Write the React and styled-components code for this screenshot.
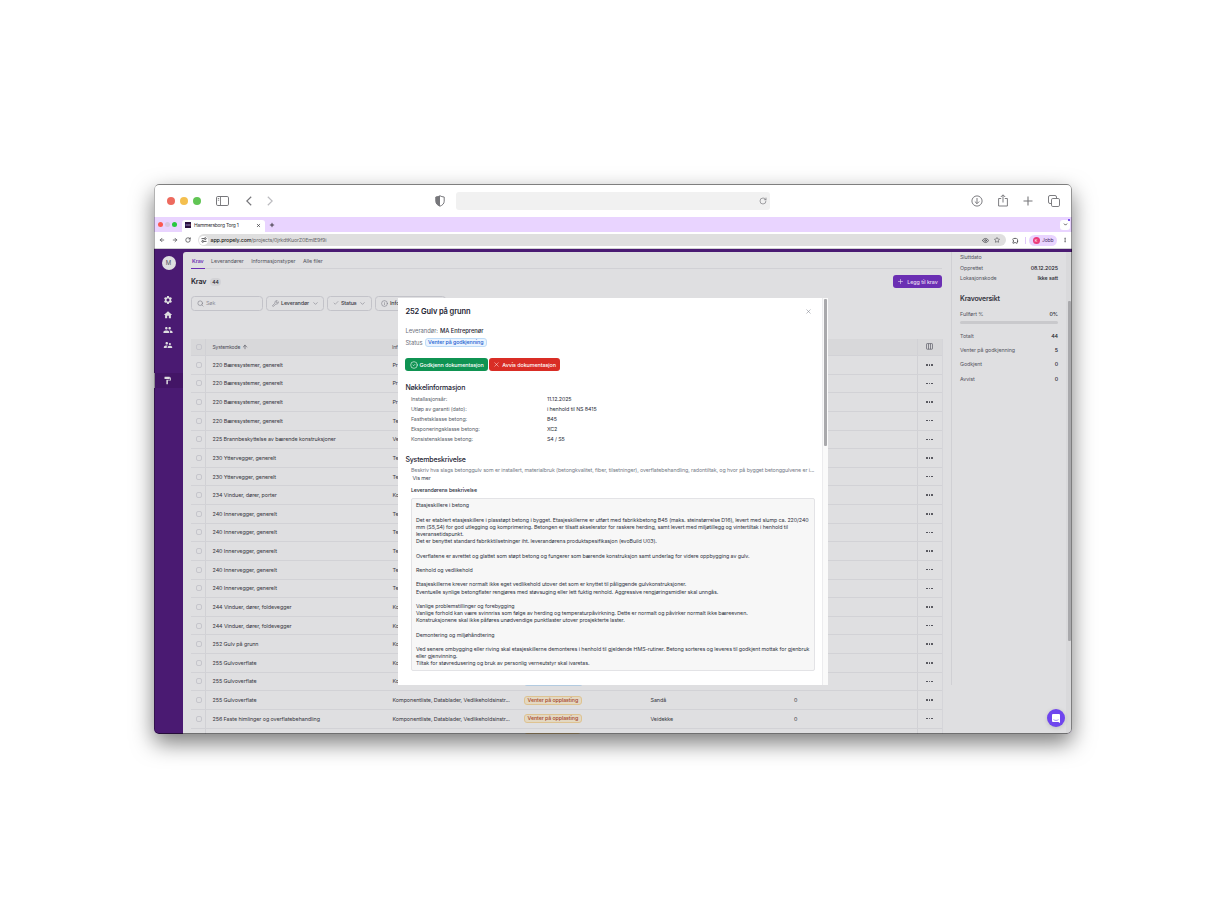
import React, { useState } from 'react'
import styled, { createGlobalStyle } from 'styled-components'
import {
  Search, ChevronDown, Check, Info, Plus, X, ArrowUp, ArrowLeft, ArrowRight,
  RotateCw, CircleCheck, Star, Eye, EllipsisVertical, Wrench
} from 'lucide-react'
import { MdSettings, MdHome, MdPeople, MdSupervisorAccount, MdFormatPaint, MdOutlineExtension } from 'react-icons/md'

const GlobalStyle = createGlobalStyle`
  * {
    box-sizing: border-box;
  }
  body {
    margin: 0;
    background: #fff;
    font-family: Inter, "Liberation Sans", sans-serif;
    overflow: hidden;
  }
  button {
    font-family: inherit;
    cursor: pointer;
  }
`;

const Page = styled.div`
  width: 1226px;
  height: 918px;
  padding: 184px 154px;
  background: #fff;
`;

const Window = styled.div`
  width: 918px;
  height: 550px;
  border-radius: 5px;
  overflow: hidden;
  display: flex;
  flex-direction: column;
  background: #fff;
  position: relative;
  box-shadow: 0 9px 22px rgba(0, 0, 0, 0.52);

  /* hairline drawn over the content */
  &::after {
    content: '';
    position: absolute;
    inset: 0;
    border: 1px solid rgba(0, 0, 0, 0.5);
    border-left-color: rgba(0, 0, 0, 0.3);
    border-right-color: rgba(0, 0, 0, 0.42);
    border-radius: 5px;
    pointer-events: none;
  }
`;

const Row = styled.div`
  display: flex;
  align-items: center;
  gap: ${(p) => p.$gap || 0}px;
`;

/* outer browser */
const SafariBar = styled.div`
  height: 33px;
  flex: none;
  display: grid;
  grid-template-columns: 281px 335px 1fr;
  align-items: center;
  color: #77777b;
`;

const Lights = styled.div`
  display: flex;
  gap: ${(p) => p.$gap}px;
  margin-right: ${(p) => p.$after}px;
`;

const Light = styled.span`
  width: ${(p) => p.$size}px;
  height: ${(p) => p.$size}px;
  border-radius: 50%;
  background: ${(p) => p.$color};
`;

const SafariLeft = styled(Row)`
  padding-left: 13px;
`;

const NavArrows = styled.div`
  display: flex;
  gap: 15px;
  margin-left: 17px;

  svg:last-child {
    color: #bcbcc0;
  }
`;

const SafariField = styled.div`
  width: 314px;
  height: 18px;
  border-radius: 3px;
  background: #f1f1f1;
  display: flex;
  align-items: center;
  justify-content: flex-end;
  padding: 1px 3.5px 0 0;
`;

const SafariTools = styled(Row)`
  justify-content: flex-end;
  padding-right: 12px;
`;

/* inner browser */
const TabStrip = styled.div`
  height: 15px;
  flex: none;
  background: #e9d4ff;
  display: flex;
  align-items: center;
  padding: 0 2px 0 4px;
`;

const BrowserTab = styled.div`
  width: 83px;
  height: 12px;
  margin-top: 3px;
  border-radius: 3px 3px 0 0;
  background: #fff;
  display: flex;
  align-items: center;
  padding: 0 4px 2px 3px;
  font-size: 4.9px;
  letter-spacing: -0.2px;
  color: #2b2b30;
  white-space: nowrap;
`;

const Favicon = styled.span`
  width: 6px;
  height: 6px;
  margin-right: 3px;
  background: #2c1240;
  color: #b9a5cc;
  font-size: 3px;
  line-height: 6px;
  text-align: center;
`;

const TabClose = styled(X)`
  margin-left: auto;
`;

const NewTab = styled(Plus)`
  margin-left: 4px;
`;

const TabMenu = styled.div`
  width: 10px;
  height: 10px;
  border-radius: 3px;
  margin-left: auto;
  background: #fff;
  display: flex;
  align-items: center;
  justify-content: center;
  position: relative;

  &::after {
    content: '';
    position: absolute;
    right: 0;
    top: -1px;
    width: 2px;
    height: 2px;
    background: #7b52f0;
  }
`;

const AddressBar = styled.div`
  height: 17px;
  flex: none;
  display: flex;
  align-items: center;
  padding: 0 4px 0 5px;
  border-bottom: 1px solid #cfcfd2;
  color: #333338;
`;

const Url = styled.div`
  width: 808px;
  height: 12px;
  margin-left: 7px;
  border-radius: 6px;
  background: #dfdfdf;
  display: flex;
  align-items: center;
  padding: 0 6px 0 1px;
  font-size: 5.3px;
  letter-spacing: -0.13px;
  color: #66666b;
  white-space: nowrap;

  b {
    font-weight: 500;
    color: #1d1d22;
  }
`;

const UrlIcon = styled.span`
  width: 9px;
  height: 9px;
  margin-right: 2.5px;
  border-radius: 50%;
  background: #fff;
  display: flex;
  align-items: center;
  justify-content: center;
`;

const UrlTools = styled(Row)`
  margin-left: auto;
  color: #44444a;
`;

const Extensions = styled.div`
  display: flex;
  margin-left: 6px;
  padding-right: 6px;
  border-right: 1px solid #e0c8fa;
`;

const Profile = styled.div`
  width: 28px;
  height: 11px;
  border-radius: 6px;
  margin: 0 5px 0 3px;
  background: #e9d4ff;
  display: flex;
  align-items: center;
  gap: 2.5px;
  padding-left: 3.5px;
  font-size: 5px;
  letter-spacing: -0.15px;
  color: #4a2a66;
`;

const Avatar = styled.span`
  width: 7px;
  height: 7px;
  border-radius: 50%;
  background: #ec3b7a;
  color: #fff;
  font-size: 4px;
  line-height: 7px;
  text-align: center;
`;

/* application */
const Shell = styled.div`
  flex: 1;
  min-height: 0;
  display: flex;
  padding-top: 3px;
  background: #4a1a72;
  position: relative;
`;

const Sidebar = styled.div`
  width: 29px;
  flex: none;
  display: flex;
  flex-direction: column;
  align-items: center;
  padding-top: 4px;
  color: #dedee0;
`;

const UserBadge = styled.div`
  width: 14px;
  height: 14px;
  margin-bottom: 22px;
  border-radius: 50%;
  background: #dedee0;
  color: #56565e;
  font-size: 6px;
  line-height: 14px;
  text-align: center;
`;

const NavItem = styled.div`
  width: 29px;
  height: 15px;
  margin-top: ${(p) => (p.$active ? 21 : 0)}px;
  padding-right: 3px;
  display: flex;
  align-items: center;
  justify-content: center;
  border-left: 1px solid ${(p) => (p.$active ? '#c9c4ce' : 'transparent')};
  background: ${(p) => (p.$active ? '#431566' : 'none')};
`;

const Main = styled.div`
  flex: 1;
  min-width: 0;
  display: flex;
  border-top-left-radius: 3px;
  background: #dfdfe1;
  overflow: hidden;
`;

const Content = styled.div`
  width: 768px;
  flex: none;
  padding-left: 8px;
`;

const Tabs = styled.div`
  width: 751px;
  height: 17px;
  display: flex;
  gap: 5.5px;
  border-bottom: 1px solid #d1d1d5;
`;

const Tab = styled.div`
  height: 17px;
  padding: 0 1px;
  line-height: 19.5px;
  font-size: 5.3px;
  font-weight: ${(p) => (p.$active ? 600 : 400)};
  letter-spacing: -0.07px;
  color: ${(p) => (p.$active ? '#6b2fb3' : '#55555f')};
  border-bottom: ${(p) => (p.$active ? '1px solid #6b2fb3' : 'none')};
`;

const Heading = styled.div`
  width: 751px;
  height: 25px;
  display: flex;
  align-items: center;
  font-size: 7.2px;
  font-weight: 600;
  letter-spacing: -0.2px;
  color: #26262e;
`;

const Count = styled.span`
  height: 8px;
  margin: 1px 0 0 4px;
  padding: 0 2px;
  border-radius: 4px;
  background: #d3d3d6;
  font-size: 5px;
  font-weight: 500;
  line-height: 8px;
  letter-spacing: 0;
`;

const AddButton = styled.button`
  width: 49px;
  height: 13px;
  margin-left: auto;
  padding: 0;
  border: none;
  border-radius: 3px;
  background: #6b2fb3;
  color: #e8dff2;
  display: flex;
  align-items: center;
  justify-content: center;
  gap: 3px;
  font-size: 5.3px;
  font-weight: 500;
  letter-spacing: -0.04px;
`;

const Filters = styled.div`
  height: 44.5px;
  padding-top: 1.5px;
  display: flex;
  align-items: flex-start;
  gap: 3.5px;
`;

const FilterBox = styled.div`
  width: ${(p) => p.$width}px;
  height: 15px;
  padding: 0 4.5px;
  border: 1px solid #c3c3c9;
  border-radius: 3.5px;
  display: flex;
  align-items: center;
  gap: 2.5px;
  font-size: 5.4px;
  font-weight: ${(p) => (p.$muted ? 400 : 500)};
  letter-spacing: -0.13px;
  color: ${(p) => (p.$muted ? '#8f8f99' : '#3a3a44')};
  white-space: nowrap;

  svg {
    color: #7c7c86;
    flex: none;
  }
`;

const Arrow = styled(ChevronDown)`
  margin-left: auto;
`;

const Table = styled.div`
  width: 751.5px;
  border-right: 1px solid #d5d5d9;
`;

const TableRow = styled.div`
  height: ${(p) => (p.$head ? 17.5 : 18.64)}px;
  display: grid;
  grid-template-columns: 15px 183.5px 132px 126px 139px 130.5px 1fr;
  align-items: stretch;
  border-bottom: 1px solid #d2d2d6;
  background: ${(p) => (p.$head ? '#d8d8da' : 'none')};
  font-size: ${(p) => (p.$head ? 5 : 5.4)}px;
  letter-spacing: ${(p) => (p.$head ? -0.15 : -0.075)}px;
  color: ${(p) => (p.$head ? '#4a4a55' : '#363640')};
`;

const Cell = styled.div`
  display: flex;
  align-items: center;
  gap: 2px;
  padding-left: ${(p) => p.$pad || 0}px;
  border-right: ${(p) => (p.$line ? '1px solid #d1d1d5' : 'none')};
  border-left: ${(p) => (p.$edge ? '1px solid #d1d1d5' : 'none')};
  white-space: nowrap;
  overflow: hidden;
`;

const Box = styled.span`
  width: 6px;
  height: 6px;
  border: 1px solid #c6c6cc;
  border-radius: 2px;
`;

const tones = {
  amber: ['#dec391', '#e3d8c2', '#a8492c'],
  blue: ['#bfdcf8', '#eaf4ff', '#1f5fd0'],
  dimBlue: ['#b3cbe0', '#cfd9e4', '#1f5fd0'],
};

const Badge = styled.span`
  height: 9px;
  width: ${(p) => (p.$width ? p.$width + 'px' : 'auto')};
  padding: 0 2.5px;
  border: 1px solid ${(p) => tones[p.$tone][0]};
  border-radius: 3px;
  background: ${(p) => tones[p.$tone][1]};
  color: ${(p) => tones[p.$tone][2]};
  font-size: 5.3px;
  line-height: 7px;
  font-weight: 500;
  letter-spacing: -0.09px;
  white-space: nowrap;
`;

const Dots = styled.span`
  width: 7px;
  margin-left: 8px;
  display: flex;
  justify-content: space-between;

  i {
    width: 1.6px;
    height: 1.6px;
    border-radius: 50%;
    background: #3f3f48;
  }
`;

const Aside = styled.div`
  width: 115px;
  height: 433px;
  padding: 0 8px 0 8px;
  border-left: 1px solid #d0d0d4;
`;

const Fact = styled.div`
  height: ${(p) => p.$h}px;
  display: flex;
  align-items: center;
  justify-content: space-between;
  font-size: 5.3px;
  letter-spacing: -0.07px;
  color: #55555f;

  b {
    font-weight: 500;
    color: #26262e;
  }
`;

const AsideTitle = styled.div`
  height: 21px;
  margin-top: 4.500px;
  line-height: 22px;
  font-size: 6.9px;
  font-weight: 600;
  letter-spacing: -0.2px;
  color: #33333d;
`;

const Progress = styled.div`
  height: 3px;
  margin: 2.5px 0 5px;
  border-radius: 2px;
  background: #c9c9cc;
`;

const ScrollTrack = styled.div`
  width: 6px;
  margin-left: auto;
  padding: 49px 1px 0 2px;
  background: #d9d9db;
`;

const ScrollThumb = styled.div`
  width: 3px;
  height: ${(p) => p.$h}px;
  border-radius: 1px;
  background: #a9a9ac;
`;

const Chat = styled.div`
  position: absolute;
  right: 7px;
  bottom: 7px;
  width: 18px;
  height: 18px;
  border-radius: 50%;
  background: #6f45ee;
  box-shadow: 0 1px 4px rgba(0, 0, 0, 0.15);
  display: flex;
  align-items: center;
  justify-content: center;
`;

/* dialog */
const Dialog = styled.div`
  position: absolute;
  left: 244px;
  top: 49px;
  width: 430px;
  height: 387px;
  background: #fff;
  display: flex;
  color: #2a2e3a;
`;

const DialogBody = styled.div`
  flex: 1;
  min-width: 0;
  padding: 6px 7px 0 7.4px;
`;

const DialogScroll = styled.div`
  width: 6px;
  padding: 1px 1px 0 1px;
  background: #fafafa;
  border-left: 1px solid #ececee;
`;

const DialogHead = styled.div`
  height: 15px;
  padding-right: 3px;
  display: flex;
  align-items: center;
  justify-content: space-between;
  font-size: 7.5px;
  font-weight: 600;
  letter-spacing: -0.1px;
  color: #1d2433;
`;

const Meta = styled.div`
  height: 11.5px;
  margin-top: ${(p) => p.$top || 0}px;
  margin-bottom: ${(p) => p.$bottom || 0}px;
  display: flex;
  align-items: center;
  gap: 2px;
  font-size: 5.8px;
  letter-spacing: -0.02px;
  color: #6a6f7a;

  b {
    font-weight: 500;
    color: #1d2433;
  }
`;

const Action = styled.button`
  width: ${(p) => p.$width}px;
  height: 13px;
  padding: 0;
  border: none;
  border-radius: 3px;
  background: ${(p) => p.$color};
  color: #fff;
  display: flex;
  align-items: center;
  justify-content: center;
  gap: 2px;
  font-size: 5.4px;
  font-weight: 500;
  letter-spacing: -0.08px;
  white-space: nowrap;
`;

const Actions = styled.div`
  display: flex;
  gap: 1.5px;
  margin: 9.5px 0 10px;
`;

const Section = styled.div`
  height: 13px;
  margin-top: ${(p) => p.$top || 0}px;
  line-height: 13px;
  font-size: 7px;
  font-weight: 500;
  letter-spacing: -0.17px;
  color: #1d2433;
`;

const KeyRow = styled.div`
  height: 10px;
  padding-left: 5.5px;
  display: grid;
  grid-template-columns: 136px 1fr;
  align-items: center;
  font-size: 5.35px;
  letter-spacing: -0.09px;
  color: #5a5f6b;

  span + span {
    color: #2a2e3a;
  }
`;

const Lead = styled.div`
  height: 7.3px;
  margin-top: ${(p) => p.$top || 0}px;
  padding-left: ${(p) => p.$pad}px;
  line-height: 7.3px;
  font-size: 5.3px;
  letter-spacing: -0.09px;
  color: ${(p) => p.$color || '#737985'};
  font-weight: ${(p) => p.$weight || 400};
  white-space: nowrap;
`;

const Answer = styled.div`
  width: 404px;
  height: 173.5px;
  margin: 3.3px 0 0 5.5px;
  padding: 3.9px 4px;
  border: 1px solid #e3e3e6;
  border-radius: 2px;
  background: #f7f7f7;
`;

const Line = styled.div`
  height: 7.18px;
  line-height: 7.18px;
  font-size: 5.3px;
  letter-spacing: -0.066px;
  color: #30343f;
  white-space: nowrap;
`;

const rows = [
  { code: '220 Bæresystemer, generelt', info: 'Pr' },
  { code: '220 Bæresystemer, generelt', info: 'Pr' },
  { code: '220 Bæresystemer, generelt', info: 'Pr' },
  { code: '220 Bæresystemer, generelt', info: 'Te' },
  { code: '225 Brannbeskyttelse av bærende konstruksjoner', info: 'Ve' },
  { code: '230 Yttervegger, generelt', info: 'Te' },
  { code: '230 Yttervegger, generelt', info: 'Te' },
  { code: '234 Vinduer, dører, porter', info: 'Ko' },
  { code: '240 Innervegger, generelt', info: 'Te' },
  { code: '240 Innervegger, generelt', info: 'Te' },
  { code: '240 Innervegger, generelt', info: 'Te' },
  { code: '240 Innervegger, generelt', info: 'Te' },
  { code: '240 Innervegger, generelt', info: 'Te' },
  { code: '244 Vinduer, dører, foldevegger', info: 'Ko' },
  { code: '244 Vinduer, dører, foldevegger', info: 'Ko' },
  { code: '252 Gulv på grunn', info: 'Ko' },
  { code: '255 Gulvoverflate', info: 'Ko' },
  { code: '255 Gulvoverflate', info: 'Ko', tone: 'dimBlue' },
  { code: '255 Gulvoverflate', info: 'Komponentliste, Datablader, Vedlikeholdsinstr...', tone: 'amber', status: 'Venter på opplasting', supplier: 'Sandå', count: '0' },
  { code: '256 Faste himlinger og overflatebehandling', info: 'Komponentliste, Datablader, Vedlikeholdsinstr...', tone: 'amber', status: 'Venter på opplasting', supplier: 'Veidekke', count: '0' },
];

const facts = [
  ['Installasjonsår:', '11.12.2025'],
  ['Utløp av garanti (dato):', 'i henhold til NS 8415'],
  ['Fasthetsklasse betong:', 'B45'],
  ['Eksponeringsklasse betong:', 'XC2'],
  ['Konsistensklasse betong:', 'S4 / S5'],
];

const answer = [
  'Etasjeskillere i betong',
  '',
  'Det er etablert etasjeskillere i plasstøpt betong i bygget. Etasjeskillerne er utført med fabrikkbetong B45 (maks. steinstørrelse D16), levert med slump ca. 220/240',
  'mm (S5,S4) for god utlegging og komprimering. Betongen er tilsatt akselerator for raskere herding, samt levert med miljøtillegg og vintertiltak i henhold til',
  'leveransetidspunkt.',
  'Det er benyttet standard fabrikktilsetninger iht. leverandørens produktspesifikasjon (evoBuild U03).',
  '',
  'Overflatene er avrettet og glattet som støpt betong og fungerer som bærende konstruksjon samt underlag for videre oppbygging av gulv.',
  '',
  'Renhold og vedlikehold',
  '',
  'Etasjeskillerne krever normalt ikke eget vedlikehold utover det som er knyttet til påliggende gulvkonstruksjoner.',
  'Eventuelle synlige betongflater rengjøres med støvsuging eller lett fuktig renhold. Aggressive rengjøringsmidler skal unngås.',
  '',
  'Vanlige problemstillinger og forebygging',
  'Vanlige forhold kan være svinnriss som følge av herding og temperaturpåvirkning. Dette er normalt og påvirker normalt ikke bæreevnen.',
  'Konstruksjonene skal ikke påføres unødvendige punktlaster utover prosjekterte laster.',
  '',
  'Demontering og miljøhåndtering',
  '',
  'Ved senere ombygging eller riving skal etasjeskillerne demonteres i henhold til gjeldende HMS-rutiner. Betong sorteres og leveres til godkjent mottak for gjenbruk',
  'eller gjenvinning.',
  'Tiltak for støvredusering og bruk av personlig verneutstyr skal ivaretas.',
];

const Shield = () => (
  <svg width="10" height="12" viewBox="0 0 10 12" fill="none">
    <path d="M5 .8C6.2 1.5 7.6 1.9 9.2 2v4.2c0 2.4-1.700 4-4.2 5C2.5 10.2.8 8.6.8 6.2V2C2.4 1.9 3.8 1.500 5 .8z" stroke="#77777b" />
    <path d="M5 .8v10.4C2.5 10.2.8 8.6.8 6.2V2C2.4 1.9 3.8 1.5 5 .8z" fill="#77777b" />
  </svg>
);

const SidebarIcon = () => (
  <svg width="13" height="10" viewBox="0 0 13 10" fill="none" stroke="currentColor">
    <rect x=".5" y=".5" width="12" height="9" rx="1.3" />
    <path d="M4.500.5v9M1.800 2.500h1.400M1.800 4.200h1.400" strokeWidth=".9" />
  </svg>
);

const Chevron = ({ flip }) => (
  <svg width="6" height="10" viewBox="0 0 6 10" fill="none" stroke="currentColor" strokeWidth="1.2">
    <path d={flip ? 'M.8.7 5.200 5 .8 9.300' : 'M5.200.7.8 5l4.400 4.300'} />
  </svg>
);

const DownloadIcon = () => (
  <svg width="12" height="12" viewBox="0 0 12 12" fill="none" stroke="currentColor" strokeWidth=".95">
    <circle cx="6" cy="6" r="5.100" />
    <path d="M6 3v5.600M3.800 6.500 6 8.700l2.200-2.200" />
  </svg>
);

const ShareIcon = () => (
  <svg width="10" height="13" viewBox="0 0 10 13" fill="none" stroke="currentColor" strokeWidth=".95">
    <path d="M3.200 4.500H.6v7.500h8.800V4.500H6.800M5 8.500V1M2.800 3 5 .8 7.200 3" />
  </svg>
);

const PlusIcon = () => (
  <svg width="10" height="10" viewBox="0 0 10 10" stroke="currentColor" strokeWidth="1.1">
    <path d="M5 .5v9M.5 5h9" />
  </svg>
);

const WindowsIcon = () => (
  <svg width="12" height="12" viewBox="0 0 12 12" fill="none" stroke="currentColor" strokeWidth=".95">
    <rect x="3.500" y="3.500" width="8" height="8" rx="1.300" />
    <path d="M3.500 8.500H2A1.500 1.500 0 0 1 .5 7V2A1.500 1.500 0 0 1 2 .5h5A1.500 1.500 0 0 1 8.500 2v1.500" />
  </svg>
);

const Tune = () => (
  <svg width="6" height="6" viewBox="0 0 12 12" fill="none" stroke="#333338" strokeWidth="1.6">
    <path d="M1 3.200h5M11 8.800H6" />
    <circle cx="8.500" cy="3.200" r="1.800" />
    <circle cx="3.500" cy="8.800" r="1.800" />
  </svg>
);

const ColumnsIcon = () => (
  <svg width="7" height="7" viewBox="0 0 7 7" fill="none" stroke="#5d5d67" strokeWidth=".7">
    <rect x=".5" y=".6" width="6" height="5.600" rx=".6" />
    <path d="M2.500.6v5.600M4.500.6v5.600" />
  </svg>
);

const ChatIcon = () => (
  <svg width="8" height="9" viewBox="0 0 8 9">
    <path d="M1 0h6a1 1 0 0 1 1 1v8L6.300 8H1a1 1 0 0 1-1-1V1a1 1 0 0 1 1-1z" fill="#fff" />
    <path d="M1.500 5.600c1.500 1.100 3.500 1.100 5 0" fill="none" stroke="#6f45ee" strokeWidth=".6" />
  </svg>
);

const RowDots = () => (
  <Dots>
    <i /><i /><i />
  </Dots>
);

const BrowserChrome = () => (
  <>
    <SafariBar>
      <SafariLeft>
        <Lights $gap={5} $after={15}>
          <Light $size={8} $color="#ed6a5e" />
          <Light $size={8} $color="#f4bf4f" />
          <Light $size={8} $color="#61c554" />
        </Lights>
        <SidebarIcon />
        <NavArrows>
          <Chevron />
          <Chevron flip />
        </NavArrows>
      </SafariLeft>
      <Row $gap={11}>
        <Shield />
        <SafariField>
          <RotateCw size={8} strokeWidth={2} />
        </SafariField>
      </Row>
      <SafariTools $gap={15}>
        <DownloadIcon />
        <ShareIcon />
        <PlusIcon />
        <WindowsIcon />
      </SafariTools>
    </SafariBar>
    <TabStrip>
      <Lights $gap={2} $after={5}>
        <Light $size={5} $color="#fb5951" />
        <Light $size={5} $color="#d6c8e2" />
        <Light $size={5} $color="#27c840" />
      </Lights>
      <BrowserTab>
        <Favicon>ooo</Favicon>
        Hammersborg Torg 1
        <TabClose size={5} strokeWidth={3} />
      </BrowserTab>
      <NewTab size={6} strokeWidth={2.6} />
      <TabMenu>
        <ChevronDown size={5} strokeWidth={3} />
      </TabMenu>
    </TabStrip>
    <AddressBar>
      <Row $gap={7}>
        <ArrowLeft size={6} strokeWidth={2.6} />
        <ArrowRight size={6} strokeWidth={2.6} />
        <RotateCw size={6} strokeWidth={2.6} />
      </Row>
      <Url>
        <UrlIcon>
          <Tune />
        </UrlIcon>
        <b>app.propely.com</b>/projects/0jrkdtKuorZ0EmIE9f9i
        <UrlTools $gap={5}>
          <Eye size={7} strokeWidth={2.4} />
          <Star size={6} strokeWidth={2.2} />
        </UrlTools>
      </Url>
      <Extensions>
        <MdOutlineExtension size={7} />
      </Extensions>
      <Profile>
        <Avatar>K</Avatar>
        Jobb
      </Profile>
      <EllipsisVertical size={6} strokeWidth={2} />
    </AddressBar>
  </>
);

const DialogContent = ({ onClose }) => (
  <Dialog>
    <DialogBody>
      <DialogHead>
        252 Gulv på grunn
        <X size={7} strokeWidth={1.8} color="#7c818c" onClick={onClose} />
      </DialogHead>
      <Meta $top={6} $bottom={0.5}>
        Leverandør: <b>MA Entreprenør</b>
      </Meta>
      <Meta>
        Status <Badge $tone="blue">Venter på godkjenning</Badge>
      </Meta>
      <Actions>
        <Action $width={82.5} $color="#0f9352">
          <CircleCheck size={8} strokeWidth={1.8} />
          Godkjenn dokumentasjon
        </Action>
        <Action $width={70.5} $color="#d92d25">
          <X size={7} strokeWidth={1.6} />
          Avvis dokumentasjon
        </Action>
      </Actions>
      <Section>Nøkkelinformasjon</Section>
      {facts.map(([label, value]) => (
        <KeyRow key={label}>
          <span>{label}</span>
          <span>{value}</span>
        </KeyRow>
      ))}
      <Section $top={9}>Systembeskrivelse</Section>
      <Lead $top={1.4} $pad={5.5}>
        Beskriv hva slags betonggulv som er installert, materialbruk (betongkvalitet, fiber, tilsetninger), overflatebehandling, radontiltak, og hvor på bygget betonggulvene er i...
      </Lead>
      <Lead $pad={7} $color="#3a3f4b">Vis mer</Lead>
      <Lead $top={5} $pad={5.5} $color="#2a2e3a" $weight={500}>Leverandørens beskrivelse</Lead>
      <Answer>
        {answer.map((text, i) => (
          <Line key={i}>{text}</Line>
        ))}
      </Answer>
    </DialogBody>
    <DialogScroll>
      <ScrollThumb $h={147} />
    </DialogScroll>
  </Dialog>
);

export default function App() {
  const [open, setOpen] = useState(true);

  return (
    <Page>
      <GlobalStyle />
      <Window>
        <BrowserChrome />
        <Shell>
          <Sidebar>
            <UserBadge>M</UserBadge>
            <NavItem><MdSettings size={10} /></NavItem>
            <NavItem><MdHome size={10} /></NavItem>
            <NavItem><MdPeople size={10} /></NavItem>
            <NavItem><MdSupervisorAccount size={10} /></NavItem>
            <NavItem $active><MdFormatPaint size={9} /></NavItem>
          </Sidebar>
          <Main>
            <Content>
              <Tabs>
                <Tab $active>Krav</Tab>
                <Tab>Leverandører</Tab>
                <Tab>Informasjonstyper</Tab>
                <Tab>Alle filer</Tab>
              </Tabs>
              <Heading>
                Krav
                <Count>44</Count>
                <AddButton>
                  <Plus size={7} strokeWidth={2} />
                  Legg til krav
                </AddButton>
              </Heading>
              <Filters>
                <FilterBox $width={71.5} $muted>
                  <Search size={7} strokeWidth={2} />
                  Søk
                </FilterBox>
                <FilterBox $width={57.5}>
                  <Wrench size={7} strokeWidth={2} />
                  Leverandør
                  <Arrow size={7} strokeWidth={2} />
                </FilterBox>
                <FilterBox $width={44.5}>
                  <Check size={6} strokeWidth={2} />
                  Status
                  <Arrow size={7} strokeWidth={2} />
                </FilterBox>
                <FilterBox $width={71}>
                  <Info size={7} strokeWidth={2} />
                  Info
                </FilterBox>
              </Filters>
              <Table>
                <TableRow $head>
                  <Cell $pad={5} $line><Box /></Cell>
                  <Cell $pad={6.5}>Systemkode <ArrowUp size={6} strokeWidth={2.4} /></Cell>
                  <Cell $pad={2.5}>Inf</Cell>
                  <Cell />
                  <Cell />
                  <Cell />
                  <Cell $pad={8} $edge><ColumnsIcon /></Cell>
                </TableRow>
                {rows.map((row, i) => (
                  <TableRow key={i}>
                    <Cell $pad={5} $line><Box /></Cell>
                    <Cell $pad={6.5}>{row.code}</Cell>
                    <Cell $pad={3}>{row.info}</Cell>
                    <Cell $pad={2.5}>
                      {row.tone && <Badge $tone={row.tone} $width={row.status ? 0 : 59}>{row.status}</Badge>}
                    </Cell>
                    <Cell $pad={3}>{row.supplier}</Cell>
                    <Cell $pad={7.5}>{row.count}</Cell>
                    <Cell $edge><RowDots /></Cell>
                  </TableRow>
                ))}
                <TableRow>
                  <Cell $line />
                  <Cell />
                  <Cell />
                  <Cell $pad={2.5}><Badge $tone="amber" $width={57} /></Cell>
                  <Cell />
                  <Cell />
                  <Cell $edge />
                </TableRow>
              </Table>
            </Content>
            <Aside>
              <Fact $h={10}>Sluttdato</Fact>
              <Fact $h={11}>Opprettet <b>08.12.2025</b></Fact>
              <Fact $h={10.5}>Lokasjonskode <b>Ikke satt</b></Fact>
              <AsideTitle>Kravoversikt</AsideTitle>
              <Fact $h={9}>Fullført % <b>0%</b></Fact>
              <Progress />
              <Fact $h={14.4}>Totalt <b>44</b></Fact>
              <Fact $h={14.4}>Venter på godkjenning <b>5</b></Fact>
              <Fact $h={14.4}>Godkjent <b>0</b></Fact>
              <Fact $h={14.4}>Avvist <b>0</b></Fact>
            </Aside>
            <ScrollTrack>
              <ScrollThumb $h={340} />
            </ScrollTrack>
          </Main>
          {open && <DialogContent onClose={() => setOpen(false)} />}
          <Chat>
            <ChatIcon />
          </Chat>
        </Shell>
      </Window>
    </Page>
  )
}
